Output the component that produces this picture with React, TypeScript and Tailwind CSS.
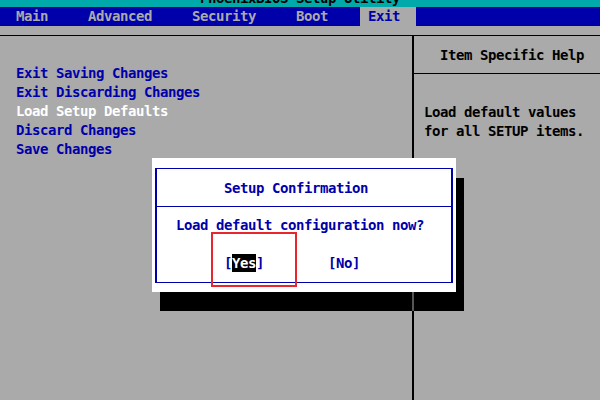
export default function App() {
  return (
    <div className="relative flex h-[400px] w-[600px] flex-col overflow-hidden bg-[#aaaaaa] font-['DejaVu_Sans_Mono',monospace] text-[14px] leading-[19px] font-bold tracking-[-0.43px]">
      {/* title bar, cut off at the top */}
      <div className="h-[7px] shrink-0 overflow-hidden bg-[#00aaaa]">
        <div className="mt-[-11px] h-[19px] whitespace-pre pl-[200px] text-black">PhoenixBIOS Setup Utility</div>
      </div>

      {/* menu bar */}
      <div className="flex h-[19px] shrink-0 bg-[#0000aa] text-[#aaaaaa]">
        <span className="ml-[16px]">Main</span>
        <span className="ml-[40px]">Advanced</span>
        <span className="ml-[40px]">Security</span>
        <span className="ml-[40px]">Boot</span>
        <span className="ml-[32px] w-[56px] bg-[#aaaaaa] pl-[8px] text-[#0000aa]">Exit</span>
      </div>

      <div className="h-[9px] shrink-0" />
      <div className="h-px shrink-0 bg-black" />

      <div className="flex flex-1">
        <div className="w-[412px] pl-[16px] pt-[28px] text-[#0000aa]">
          <div>Exit Saving Changes</div>
          <div>Exit Discarding Changes</div>
          <div className="text-white">Load Setup Defaults</div>
          <div>Discard Changes</div>
          <div>Save Changes</div>
        </div>
        <div className="w-[2px] bg-black" />
        <div className="flex flex-1 flex-col text-black">
          <div className="flex h-[37px] items-center pl-[26px] pt-px">Item Specific Help</div>
          <div className="h-px bg-black" />
          <div className="pl-[10px] pt-[29px]">
            <div>Load default values</div>
            <div>for all SETUP items.</div>
          </div>
        </div>
      </div>

      {/* dialog shadow */}
      <div className="absolute left-[160px] top-[178px] h-[133px] w-[304px] bg-black">
        <div className="absolute left-[252px] top-0 h-full w-[2px] bg-[#555555]" />
      </div>

      {/* dialog */}
      <div className="absolute left-[152px] top-[158px] h-[134px] w-[304px] bg-white px-[3px] pt-[10px] text-[#0000aa]">
        <div className="h-[115px] border-x-2 border-y border-[#0000aa]">
          <div className="flex h-[38px] items-center border-b border-[#0000aa] pl-[67px] pt-px">Setup Confirmation</div>
          <div className="mt-[9px] pl-[19px]">Load default configuration now?</div>
          <div className="mt-[19px] flex items-center pl-[67px]">
            <span>
              [<span className="inline-block bg-black leading-[18px] text-white">Yes</span>]
            </span>
            <span className="ml-[64px]">[No]</span>
          </div>
        </div>
      </div>

      {/* annotation */}
      <div className="absolute left-[211px] top-[232px] h-[55px] w-[86px] border-2 border-[#e8262d]" />
    </div>
  );
}
